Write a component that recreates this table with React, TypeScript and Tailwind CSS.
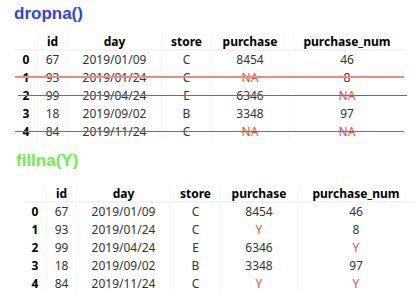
import React from "react";

type Row = { i: string; id: string; day: string; store: string; p: string; n: string };

const rowsA: Row[] = [
  { i: "0", id: "67", day: "2019/01/09", store: "C", p: "8454", n: "46" },
  { i: "1", id: "93", day: "2019/01/24", store: "C", p: "NA", n: "8" },
  { i: "2", id: "99", day: "2019/04/24", store: "E", p: "6346", n: "NA" },
  { i: "3", id: "18", day: "2019/09/02", store: "B", p: "3348", n: "97" },
  { i: "4", id: "84", day: "2019/11/24", store: "C", p: "NA", n: "NA" },
];

const rowsB: Row[] = rowsA.map((r) => ({
  ...r,
  p: r.p === "NA" ? "Y" : r.p,
  n: r.n === "NA" ? "Y" : r.n,
}));

const grid = "grid grid-cols-[23px_30px_94px_50px_77px_116px]";

function Val({ v }: { v: string }) {
  const red = v === "NA" || v === "Y";
  return <span className={red ? "text-[#ea4a38]" : "text-[#333333]"}>{v}</span>;
}

function Strike({ kind }: { kind: number }) {
  if (kind === 1)
    return <div className="absolute left-0 right-[1px] top-[7px] h-[2px] bg-[#f08a7e]" />;
  if (kind === 2)
    return <div className="absolute left-[3px] right-[-2px] top-[8px] h-[1px] bg-[#e0442e]" />;
  if (kind === 4)
    return <div className="absolute left-0 right-[1px] top-[8px] h-[1px] bg-[#e0442e]" />;
  return null;
}

function Table({ rows, strikes }: { rows: Row[]; strikes: boolean }) {
  return (
    <div className="w-[390px] text-[12px] font-['Noto_Sans',sans-serif]">
      <div className={`${grid} h-[18px] leading-[18px] font-bold text-black border-b-2 border-[#f4f4f4] text-center`}>
        <div className="border-r border-[#f8f8f8]"></div>
        <div className="border-r border-[#f8f8f8]">id</div>
        <div className="border-r border-[#f8f8f8]">day</div>
        <div className="border-r border-[#f8f8f8]">store</div>
        <div className="border-r border-[#f8f8f8]">purchase</div>
        <div>purchase_num</div>
      </div>
      {rows.map((r, k) => (
        <div key={k} className={`${grid} relative h-[18px] leading-[18px] text-center`}>
          <div className="font-bold text-black border-r border-[#f8f8f8]">{r.i}</div>
          <div className="text-[#333333] border-r border-[#f8f8f8]">{r.id}</div>
          <div className="text-[#333333] border-r border-[#f8f8f8]">{r.day}</div>
          <div className="text-[#333333] border-r border-[#f8f8f8]">{r.store}</div>
          <div className="border-r border-[#f8f8f8]"><Val v={r.p} /></div>
          <div><Val v={r.n} /></div>
          {strikes && <Strike kind={k} />}
        </div>
      ))}
    </div>
  );
}

export default function App() {
  return (
    <div className="w-[420px] h-[300px] bg-white overflow-hidden font-['Liberation_Sans',sans-serif]">
      <div className="pl-[14px] pt-[4px] h-[24px] text-[17px] leading-[20px] font-bold text-[#2a44f0]">
        dropna()
      </div>
      <div className="pl-[15px] mt-[9px]">
        <Table rows={rowsA} strikes={true} />
      </div>
      <div className="pl-[16px] mt-[10px] h-[20px] text-[17px] leading-[20px] font-bold text-[#6cee48]">
        fillna(Y)
      </div>
      <div className="pl-[24px] mt-[14px]">
        <Table rows={rowsB} strikes={false} />
      </div>
    </div>
  );
}
